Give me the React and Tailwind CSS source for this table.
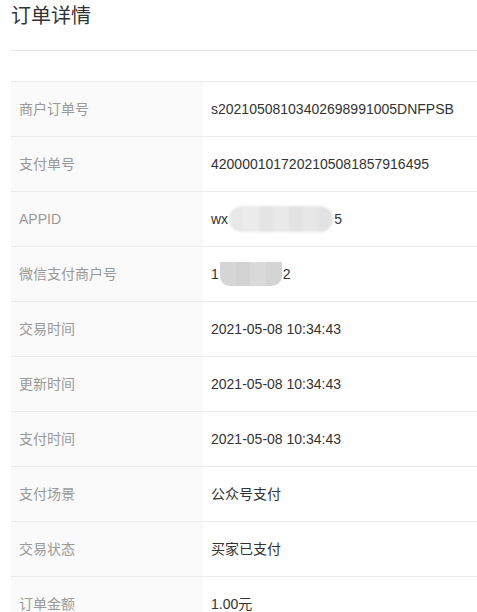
import React from "react";

const rows = [
  ["商户订单号", "s20210508103402698991005DNFPSB"],
  ["支付单号", "4200001017202105081857916495"],
  ["APPID", "appid"],
  ["微信支付商户号", "mch"],
  ["交易时间", "2021-05-08 10:34:43"],
  ["更新时间", "2021-05-08 10:34:43"],
  ["支付时间", "2021-05-08 10:34:43"],
  ["支付场景", "公众号支付"],
  ["交易状态", "买家已支付"],
  ["订单金额", "1.00元"],
];

function Value({ v }) {
  if (v === "appid") {
    return (
      <span className="flex items-center">
        wx
        <span className="relative mx-[1px] inline-flex h-[26px] w-[104px] overflow-hidden rounded-[13px] blur-[1px]">
          <span className="h-full w-[14px] bg-[#e8e8e8]" />
          <span className="h-full w-[16px] bg-[#ececec]" />
          <span className="h-full w-[14px] bg-[#e4e4e4]" />
          <span className="h-full w-[16px] bg-[#e9e9e9]" />
          <span className="h-full w-[14px] bg-[#e3e3e3]" />
          <span className="h-full w-[16px] bg-[#e7e7e7]" />
          <span className="h-full w-[14px] bg-[#e2e2e2]" />
        </span>
        5
      </span>
    );
  }
  if (v === "mch") {
    return (
      <span className="flex items-center">
        1
        <span className="mx-[1px] inline-flex h-[24px] w-[62px] overflow-hidden rounded-b-[10px] blur-[0.5px]">
          <span className="h-full w-[16px] bg-[#d6d6d6]" />
          <span className="h-full w-[14px] bg-[#d2d2d2]" />
          <span className="h-full w-[16px] bg-[#d9d9d9]" />
          <span className="h-full w-[16px] bg-[#d4d4d4]" />
        </span>
        2
      </span>
    );
  }
  return <span>{v}</span>;
}

export default function App() {
  return (
    <div
      className="w-[477px] overflow-hidden bg-white pl-[11px]"
      style={{ fontFamily: '"Liberation Sans", Arial, "Noto Sans CJK SC", sans-serif' }}
    >
      <div className="flex h-[51px] items-start border-b border-[#e5e5e5]">
        <h1 className="mt-[4px] text-[20px] leading-[24px] font-normal text-[#333]">订单详情</h1>
      </div>
      <div className="mt-[30px] border-t border-[#ebebeb]">
        {rows.map(([k, v]) => (
          <div key={k} className="flex h-[55px] border-b border-[#ebebeb] text-[14px]">
            <div className="flex w-[192px] items-center bg-[#fafafa] pl-[8px] text-[#999]">{k}</div>
            <div className="flex flex-1 items-center pl-[8px] text-[#333]">
              <Value v={v} />
            </div>
          </div>
        ))}
      </div>
    </div>
  );
}
